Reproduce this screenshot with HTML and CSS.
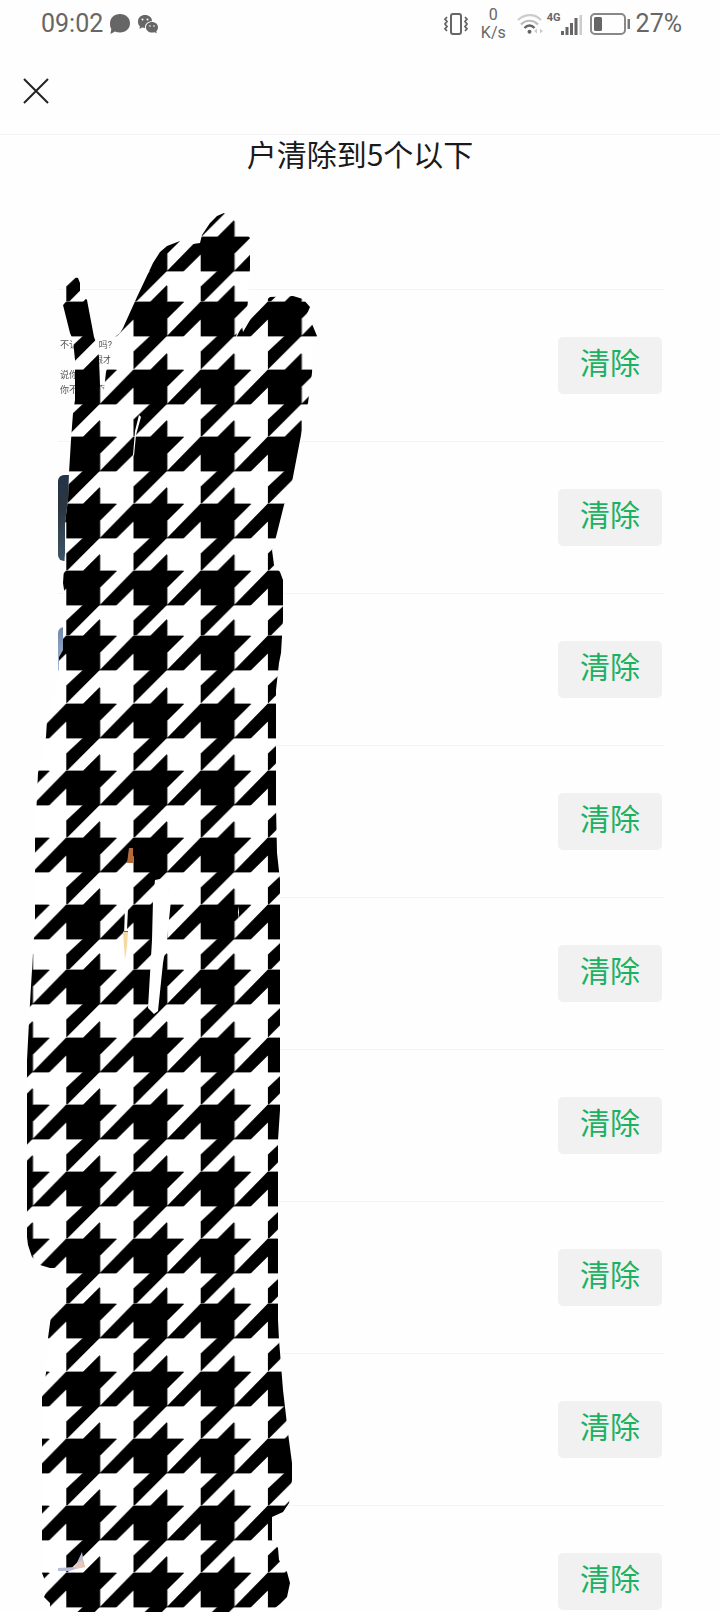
FILE: index.html
```html
<!DOCTYPE html>
<html lang="zh-CN">
<head>
    <meta charset="UTF-8">
    <meta name="viewport" content="width=device-width, initial-scale=1.0">
    <title>清除用户</title>
    <link rel="stylesheet" href="styles.css">
</head>
<body>
    <!-- Status bar -->
    <div class="status-bar">
        <div class="status-left">
            <span class="status-text">09:02</span>
            <svg class="icon-bubble" width="22" height="22" viewBox="0 0 22 22">
                <path fill="#666" d="M11 1c6 0 10 4 10 9.200s-4 9.300-10 9.300c-1.800 0-3.500-.3-5-1L1.500 21l.8-5C1.200 14.500 1 12.500 1 10.500 1 5 5 1 11 1z"/>
            </svg>
            <svg width="22" height="20" viewBox="0 0 22 20">
                <path fill="#666" d="M8 1c4 0 7 2.500 7 6v.3c-4 0-7 2.500-7 6v.7c-1 0-2 0-3-.4L2.500 15l.4-2.600C1.500 11 1 9.500 1 7.500 1 3.500 4 1 8 1z"/>
                <path fill="#666" d="M15 8c3.500 0 6 2.300 6 5.300 0 1.700-.7 3-1.700 4l.4 1.900-2.200-1c-4.500 1.300-8.500-1-8.500-4.900C9 10.300 11.500 8 15 8z"/>
                <circle cx="5.500" cy="5.500" r="1" fill="#fff"/>
                <circle cx="10.500" cy="5.500" r="1" fill="#fff"/>
                <circle cx="13" cy="12" r=".8" fill="#fff"/>
                <circle cx="17" cy="12" r=".8" fill="#fff"/>
            </svg>
        </div>
        <div class="status-right">
            <svg width="26" height="22" viewBox="0 0 26 22" fill="none" stroke="#666" stroke-width="2">
                <rect x="8" y="1" width="10" height="20" rx="2"/>
                <path stroke-width="1.800" d="M4 4L2 6.200 4 8.500 2 11 4 13.500 2 15.800 4 18M22 4l2 2.200-2 2.300 2 2.500-2 2.500 2 2.300-2 2.200"/>
            </svg>
            <span class="net-speed"><span>0</span><span>K/s</span></span>
            <svg class="icon-wifi" width="26" height="22" viewBox="0 0 26 22" fill="none" stroke-width="2.200">
                <path stroke="#ccc" d="M1 7c7-6.500 17-6.500 23 0"/>
                <path stroke="#bbb" d="M4 11.500c5-5 12-5 17 0"/>
                <path stroke="#666" stroke-width="2.500" d="M7.500 15c3-3.300 7-3.300 10 0"/>
                <circle cx="12.500" cy="18.700" r="2" fill="#666"/>
                <path fill="#ccc" d="M17 18l3-2.500v5zM26 18l-3-2.500v5z"/>
            </svg>
            <span class="net-type">4G</span>
            <svg class="icon-signal" width="22" height="21" viewBox="0 0 22 21">
                <path fill="#666" d="M0 17h3v4H0zM4.500 13h3v8h-3zM9 9h3v12H9zM13.500 4h3v17h-3z"/>
                <path fill="#ccc" d="M18.500 1H21v20h-2.500z"/>
            </svg>
            <svg class="icon-battery" width="41" height="22" viewBox="0 0 41 22">
                <rect x="1" y="1" width="34" height="20" rx="4" fill="none" stroke="#888" stroke-width="2"/>
                <rect x="4" y="4" width="8" height="14" rx="1.500" fill="#666"/>
                <rect x="37.500" y="6" width="2.500" height="10" fill="#777"/>
            </svg>
            <span class="status-text">27%</span>
        </div>
    </div>

    <!-- Top bar -->
    <div class="top-bar">
        <button class="close-btn" aria-label="关闭">
            <svg width="26" height="26" viewBox="0 0 26 26" stroke="#222" stroke-width="2">
                <path d="M1 1l24 24M25 1L1 25"/>
            </svg>
        </button>
    </div>

    <h1 class="title">户清除到5个以下</h1>

    <ul class="user-list">
        <li class="user-row">
            <div class="avatar avatar-text">
                <p><span>不认</span><span>吗?</span></p>
                <p><span></span><span>跟才</span></p>
                <p><span>说你</span></p>
                <p><span>你不</span><span class="short">事</span></p>
            </div>
            <button class="clear-btn">清除</button>
        </li>
        <li class="user-row">
            <div class="avatar avatar-night"></div>
            <button class="clear-btn">清除</button>
        </li>
        <li class="user-row">
            <div class="avatar avatar-sky"></div>
            <button class="clear-btn">清除</button>
        </li>
        <li class="user-row">
            <div class="avatar"></div>
            <button class="clear-btn">清除</button>
        </li>
        <li class="user-row">
            <div class="avatar"></div>
            <button class="clear-btn">清除</button>
        </li>
        <li class="user-row">
            <div class="avatar"></div>
            <button class="clear-btn">清除</button>
        </li>
        <li class="user-row">
            <div class="avatar"></div>
            <button class="clear-btn">清除</button>
        </li>
        <li class="user-row">
            <div class="avatar"></div>
            <button class="clear-btn">清除</button>
        </li>
        <li class="user-row">
            <div class="avatar"></div>
            <button class="clear-btn">清除</button>
        </li>
    </ul>

    <!-- Houndstooth brush over names and avatars -->
    <svg class="scribble" width="340" height="1612" viewBox="0 0 340 1612">
        <defs>
            <g id="tooth">
                <path d="M0 0H17M33.500 0H50M33.500 -16V0M33.500 17V34H50M0 34H17M0 0V34M0 50V67M67.200 0V17" fill="none" stroke="#777" stroke-width="1.500"/>
                <path d="M0 0H16.500L33.500 -17V0H50.500L33.500 17V34L0 67.500V49.500L16.500 34H0z"/>
                <path d="M33.500 34H50.500L67.200 17.500V-.5z"/>
            </g>
            <!-- five teeth per tile, the last one is a bit shorter -->
            <pattern id="houndstooth" x="66.300" y="302" width="67.200" height="334" patternUnits="userSpaceOnUse">
                <use href="#tooth" y="-65"/>
                <use href="#tooth" y="0"/>
                <use href="#tooth" y="68"/>
                <use href="#tooth" y="135"/>
                <use href="#tooth" y="202"/>
                <use href="#tooth" y="269"/>
                <use href="#tooth" y="334"/>
            </pattern>
            <path id="brush" d="M66 282L69 278 73 277 78 278 80 283 80 292 87 300 94 337 97 345 99 357 100 385 104 390 106 372 112 352 115 337 120 333 123 328 137 297 153 263 160 252 167 246 180 241 193 244 200 243 202 235 210 223 217 216 224 213 233 219 250 238 250 268 248 300 246 322 237 330 236 338 242 326 243 332 257 308 270 297 293 296 303 299 310 307 307 314 312 324 317 336 313 346 312 373 308 403 302 420 302 430 292 482 284 505 276 537 272 550 274 565 280 572 283 580 283 620 281 653 279 663 276 690 276 807 277 853 280 880 280 1110 278 1140 278 1320 279 1340 283 1390 288 1433 292 1463 292 1480 289 1503 283 1512 272 1517 272 1540 278 1548 279 1560 287 1572 290 1583 287 1597 280 1604 270 1612H50V1603L44 1597 48 1588 42 1573V1397L46 1373 48 1338 51 1316 65 1302 64 1268 50 1268 40 1265 32 1257 28 1245 27 1237V1060L30 1003 33 953 35 920V840L38 773 46 737 47 720 53 700 59 673 59 657 63 650 63 627 66 603 63 583 65 553 65 523 68 500 69 473 71 440 73 413 75 400 75 360 73 340 70 333 63 305 66 300z"/>
        </defs>
        <use href="#brush" fill="#fff"/>
        <use href="#brush" fill="url(#houndstooth)"/>
        <!-- gaps between the strokes -->
        <path fill="#fff" d="M155 880L165 878 171 900 167 940 163 963 158 1011 154 1014 148 1008 152 940 153 900zM139 415l2 2-5 18-2 21-1-1 2-24zM125 906l3 2-1 22-3 6zM239 906v14l-1-8z"/>
        <!-- bits of the avatars that stay visible -->
        <path fill="#b56a3c" d="M129 848h4v15h-6z"/>
        <path fill="#f6d9a0" d="M123 932h5l-1 14-2 14z"/>
        <path fill="#666" d="M123 931h5v1h-5z"/>
        <path fill="#e3b48f" d="M77 1563l5-8 3 12-10 2z"/>
        <path fill="#b9bdd6" d="M58 1568l17-1 7-15 1 6-5 10-8 3H58z"/>
        <path fill="#e4c8c0" d="M76 1564l6-4 2 7-9 2z"/>
    </svg>
</body>
</html>
```
FILE: styles.css
```css
* {
    margin: 0;
    padding: 0;
    box-sizing: border-box;
    font-family: Roboto, 'Noto Sans CJK SC', sans-serif;
}

body {
    position: relative;
    height: 100vh;
    overflow: hidden;
    background: #fefefe;
    color: #1a1a1a;
}

/* Status bar */
.status-bar {
    height: 48px;
    padding: 0 38px 0 41px;
    display: flex;
    justify-content: space-between;
    align-items: center;
    color: #666;
}

.status-left,
.status-right {
    display: flex;
    align-items: center;
}

.status-left {
    gap: 6px;
}

.status-text {
    font-size: 25px;
    line-height: 48px;
}

.net-speed {
    display: flex;
    flex-direction: column;
    align-items: center;
    margin: 0 11px 0 12px;
    font-size: 16px;
    line-height: 18px;
}

.net-type {
    align-self: flex-start;
    margin: 11px 0 0 4px;
    font-size: 11px;
    line-height: 14px;
    font-weight: bold;
}

.icon-battery {
    margin: 0 5px 0 7px;
}

/* Top bar */
.top-bar {
    height: 87px;
    padding-left: 23px;
    display: flex;
    align-items: center;
    border-bottom: 1px solid #f4f4f4;
}

.close-btn {
    width: 26px;
    height: 26px;
    border: none;
    background: none;
    cursor: pointer;
}

.close-btn svg {
    display: block;
}

.title {
    height: 154px;
    font-family: 'Noto Sans CJK SC', sans-serif;
    font-size: 30px;
    line-height: 37px;
    font-weight: normal;
    text-align: center;
}

/* User list */
.user-list {
    margin: 0 56px 0 58px;
    list-style: none;
}

.user-row {
    height: 152px;
    padding-right: 2px;
    display: flex;
    justify-content: space-between;
    align-items: center;
    border-top: 1px solid #f4f4f4;
}

.avatar {
    width: 86px;
    height: 86px;
    border-radius: 6px;
    overflow: hidden;
}

.avatar-text {
    padding: 15px 32px 0 2px;
    color: #555;
    filter: blur(0.5px);
}

.avatar-text p {
    height: 15px;
    display: flex;
    justify-content: space-between;
    font-size: 9px;
    line-height: 15px;
}

.avatar-text .short {
    margin-right: 6px;
}

.avatar-night {
    background: linear-gradient(#22344a, #2c3640 40%, #3d566b);
}

.avatar-sky {
    background: linear-gradient(#7088a8, #a5b4d2 50%, #fff 51%);
}

.clear-btn {
    width: 104px;
    height: 57px;
    padding-bottom: 9px;
    border: none;
    border-radius: 5px;
    background: #f1f1f1;
    color: #1bb163;
    font-family: 'Noto Sans CJK SC', sans-serif;
    font-size: 30px;
    line-height: 48px;
    cursor: pointer;
}

.scribble {
    position: absolute;
    top: 0;
    left: 0;
    pointer-events: none;
}
```
